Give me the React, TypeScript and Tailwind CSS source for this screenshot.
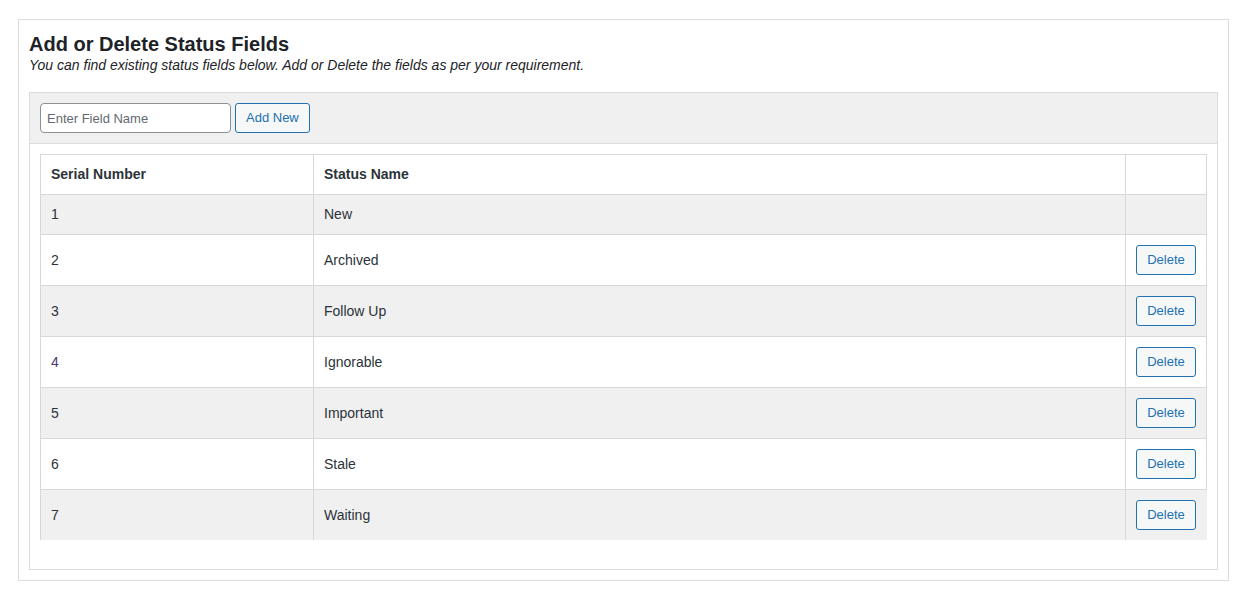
import { useState } from 'react';

const statuses = ['New', 'Archived', 'Follow Up', 'Ignorable', 'Important', 'Stale', 'Waiting'];

export default function App() {
  const [fields, setFields] = useState(statuses);
  const [name, setName] = useState('');

  return (
    <div className="min-h-screen bg-white pt-[19px] px-[18px] font-['Liberation_Sans',Arial,sans-serif] text-[14px] text-[#2c3338]">
      <div className="border border-[#dcdcde] px-[10px] pb-[10px] w-[1211px]">
        <h2 className="text-[20px] font-bold leading-[24px] text-[#1d2327] mt-[12px]">Add or Delete Status Fields</h2>
        <p className="italic text-[14px] leading-[18px] text-[#1d2327]">
          You can find existing status fields below. Add or Delete the fields as per your requirement.
        </p>

        <div className="mt-[18px] border border-[#dcdcde] pb-[29px]">
          {/* toolbar */}
          <div className="flex items-center gap-[4px] bg-[#f0f0f1] border-b border-[#dcdcde] px-[10px] py-[10px]">
            <input
              value={name}
              onChange={(e) => setName(e.target.value)}
              placeholder="Enter Field Name"
              className="w-[191px] h-[30px] rounded-[4px] border border-[#8c8f94] bg-white px-[6px] text-[13px] placeholder:text-[#646970] outline-none"
            />
            <button
              onClick={() => {
                if (name.trim()) {
                  setFields([...fields, name.trim()]);
                  setName('');
                }
              }}
              className="h-[30px] px-[10px] rounded-[3px] border border-[#2271b1] bg-[#f6f7f7] text-[13px] text-[#2271b1]"
            >
              Add New
            </button>
          </div>

          {/* table */}
          <div className="px-[10px] pt-[10px]">
            <table className="w-full border-separate border-spacing-0">
              <thead>
                <tr>
                  <th className="w-[274px] p-0 border-l border-t border-r border-b border-[#d8d8d8] text-left font-bold">
                    <div className="h-[39px] flex items-center px-[10px]">Serial Number</div>
                  </th>
                  <th className="p-0 border-t border-r border-b border-[#d8d8d8] text-left font-bold">
                    <div className="h-[39px] flex items-center px-[10px]">Status Name</div>
                  </th>
                  <th className="w-[81px] p-0 border-t border-r border-b border-[#d8d8d8]"></th>
                </tr>
              </thead>
              <tbody>
                {fields.map((field, i) => {
                  const last = i === fields.length - 1;
                  const h = i === 0 ? 'h-[39px]' : 'h-[50px]';
                  return (
                    <tr key={field + i} className={i % 2 === 0 ? 'bg-[#f0f0f0]' : 'bg-white'}>
                      <td
                        className={`p-0 border-l border-r border-[#d8d8d8] ${last ? '' : 'border-b'} ${
                          i === 3 ? 'text-[#50356e]' : ''
                        }`}
                      >
                        <div className={`${h} flex items-center px-[10px]`}>{i + 1}</div>
                      </td>
                      <td className={`p-0 border-r border-[#d8d8d8] ${last ? '' : 'border-b'}`}>
                        <div className={`${h} flex items-center px-[10px]`}>{field}</div>
                      </td>
                      <td className={`p-0 border-[#d8d8d8] ${last ? '' : 'border-b border-r'}`}>
                        <div className={`${h} flex items-center px-[10px]`}>
                          {i > 0 && (
                            <button
                              onClick={() => setFields(fields.filter((_, j) => j !== i))}
                              className="h-[30px] w-[60px] rounded-[3px] border border-[#2271b1] bg-[#f6f7f7] text-[13px] text-[#2271b1]"
                            >
                              Delete
                            </button>
                          )}
                        </div>
                      </td>
                    </tr>
                  );
                })}
              </tbody>
            </table>
          </div>
        </div>
      </div>
    </div>
  );
}
